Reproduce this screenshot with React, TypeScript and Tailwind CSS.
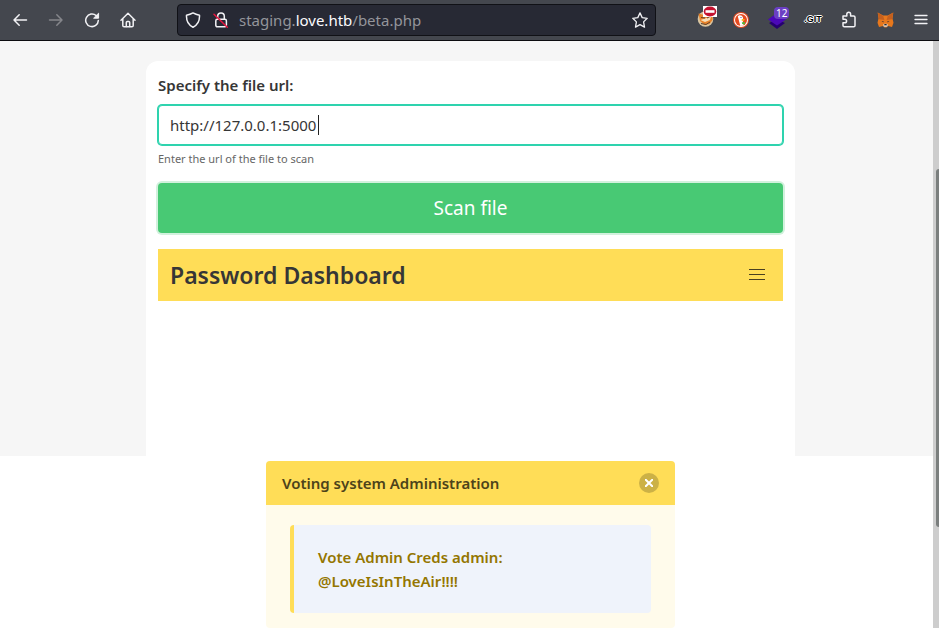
import { useState } from "react";

const stroke = {
  fill: "none",
  stroke: "currentColor",
  strokeWidth: 1.5,
  strokeLinecap: "round",
  strokeLinejoin: "round",
} as const;

function BackIcon() {
  return (
    <svg width="16" height="16" viewBox="0 0 16 16" {...stroke}>
      <path d="M14.5 8H2M7.2 2.8 2 8l5.2 5.2" />
    </svg>
  );
}

function ForwardIcon() {
  return (
    <svg width="16" height="16" viewBox="0 0 16 16" {...stroke}>
      <path d="M1.5 8H14M8.8 2.8 14 8l-5.2 5.2" />
    </svg>
  );
}

function ReloadIcon() {
  return (
    <svg width="16" height="16" viewBox="0 0 16 16" {...stroke}>
      <path d="M12.2 3.6A6.3 6.3 0 1 0 14.3 8.6" />
      <path d="M14.6 1.6v4.600H10z" fill="currentColor" strokeWidth="1" />
    </svg>
  );
}

function HomeIcon() {
  return (
    <svg width="16" height="16" viewBox="0 0 16 16" {...stroke}>
      <path d="M1 8.2 8 1.3l7 6.9M2.8 6.8v6.7c0 .8.5 1.3 1.3 1.3h7.8c.8 0 1.3-.5 1.3-1.3V6.8" />
      <path d="M6.3 14.6v-4c0-.6.4-1 1-1h1.4c.6 0 1 .4 1 1v4" />
    </svg>
  );
}

function ShieldIcon() {
  return (
    <svg width="16" height="16" viewBox="0 0 16 16" {...stroke}>
      <path d="M8 .9c2 1.2 4 1.9 6.5 2.3.3 5.6-1.7 9.7-6.5 12-4.800-2.300-6.800-6.400-6.500-12C4 2.800 6 2.100 8 .9z" />
    </svg>
  );
}

function BrokenLockIcon() {
  return (
    <svg width="16" height="16" viewBox="0 0 16 16" {...stroke}>
      <path d="M4.700 7V4.200a3.300 3.300 0 0 1 6.600 0V7" />
      <rect x="2.800" y="7.200" width="10.600" height="7.600" rx="1.500" />
      <path d="M1 2.200 14.300 15.200" stroke="#e7153f" />
    </svg>
  );
}

function StarIcon() {
  return (
    <svg width="16" height="16" viewBox="0 0 16 16" {...stroke} strokeWidth={1.3}>
      <path d="m8 .9 2.200 4.700 5 .700-3.600 3.600.900 5.200L8 12.600l-4.500 2.500.900-5.200L.8 6.300l5-.700z" />
    </svg>
  );
}

function FoxProxyIcon() {
  return (
    <svg width="18" height="22" viewBox="0 0 18 22" className="overflow-visible">
      <circle cx="9.500" cy="13" r="7.800" fill="#d9c6a2" />
      <path d="M2.500 7.500 8 9l6-1 3-1-.5 7-3 4-5 1-4.500-4z" fill="#e9832a" />
      <path d="m4.500 14 4.500-1.500 6-2-1 3.500-5 2z" fill="#f8dfb6" />
      <path d="m5 11.500 4 .5M11 12l4-2M5 17.500l5 1 4-2.500" stroke="#5f432b" strokeWidth="1" fill="none" />
      <rect x="7" y="0" width="14" height="11" fill="#fff" />
      <ellipse cx="14" cy="5.500" rx="6.300" ry="5" fill="#c4122f" />
      <rect x="9.500" y="4.200" width="9" height="2.600" fill="#fff" />
    </svg>
  );
}

function DuckIcon() {
  return (
    <svg width="16" height="16" viewBox="0 0 16 16">
      <circle cx="8" cy="8" r="8" fill="#e64b20" />
      <circle cx="8" cy="8" r="7" fill="#fff" />
      <circle cx="8" cy="8" r="6" fill="#e64b20" />
      <path d="M4.800 4.300c1-1.800 4.700-1.500 5.200 1.400l.2 2.500-.5 2 1 3.200-3.400.500z" fill="#fff" />
      <path d="m8.800 7 3.200.2-1.300 1.600-2 .1z" fill="#fdb913" />
      <path d="m8.800 10.500 3-.7v2.600l-2.600-.4z" fill="#4cba3c" />
      <circle cx="8" cy="5.500" r=".6" fill="#31557a" />
    </svg>
  );
}

function LayersIcon() {
  return (
    <svg width="18" height="18" viewBox="0 0 18 18">
      <path d="m1 12 8-4 8 4-8 6z" fill="#260071" />
      <path d="m0 8.500 9-6.500 9 6.500-9 6z" fill="#4b08b8" />
    </svg>
  );
}

function PuzzleIcon() {
  return (
    <svg width="16" height="17" viewBox="0 0 16 17" {...stroke}>
      <path d="M2 5h3.800V3.200a1.900 1.900 0 0 1 3.800 0V5h3.100c.8 0 1.300.5 1.300 1.300v8.200c0 .8-.5 1.300-1.300 1.300H3.300c-.8 0-1.300-.5-1.300-1.300v-2.700h1.800a1.800 1.800 0 0 0 0-3.600H2z" />
    </svg>
  );
}

function FoxIcon() {
  return (
    <svg width="17" height="16" viewBox="0 0 17 16">
      <path d="m.7.6 5.500 3h4.600l5.500-3-.8 6 1 4.200-1.500 4.300-4-1-1.500 1.300h-2L6 14.100l-4 1-1.500-4.300 1-4.200z" fill="#e8781c" />
      <path d="M.7.6 6.200 4l1.200 4-5.500-.7zM16.300.6 10.800 4l-1.200 4 5.500-.7z" fill="#c4601f" />
      <path d="m4.500 9 2.200.300-.3 1.200zM12.500 9l-2.200.300.3 1.200z" fill="#493333" />
      <path d="m6 12.500 1.500-.700h2l1.500.700-.5 1.700-1 .800h-2l-1-.8z" fill="#d8c4b2" />
      <path d="M7.500 12h2l.3 1.200H7.200z" fill="#24292e" />
    </svg>
  );
}

function MenuIcon() {
  return (
    <svg width="14" height="12" viewBox="0 0 14 12" {...stroke} strokeWidth={1.3}>
      <path d="M1 1.500h12M1 5.500h12M1 9.500h12" />
    </svg>
  );
}

function Toolbar() {
  return (
    <header className="flex h-[41px] items-center border-b border-[#0c0c10] bg-[#44474e] pl-0.5 text-[#f2f2f5]">
      <nav className="flex shrink-0 items-center *:grid *:w-9 *:place-items-center" aria-label="Navigation">
        <button aria-label="Back"><BackIcon /></button>
        <button aria-label="Forward" className="text-[#85868b]"><ForwardIcon /></button>
        <button aria-label="Reload"><ReloadIcon /></button>
        <button aria-label="Home"><HomeIcon /></button>
      </nav>
      <div className="mx-[31px] flex h-8 min-w-0 flex-1 items-center rounded border border-[#101116] bg-[#272934] px-[7px]">
        <button aria-label="Tracking protection"><ShieldIcon /></button>
        <button aria-label="Connection is not secure" className="ml-3"><BrokenLockIcon /></button>
        <p className="ml-2.5 flex-1 truncate text-[15px] leading-6 text-[#94959b]">
          staging.<span className="text-[#fbfbfe]">love.htb</span>/beta.php
        </p>
        <button aria-label="Bookmark this page"><StarIcon /></button>
      </div>
      <div className="grid shrink-0 grid-cols-[repeat(7,36px)] items-center justify-items-center">
        <button aria-label="FoxProxy" className="pb-1.5"><FoxProxyIcon /></button>
        <button aria-label="Privacy essentials"><DuckIcon /></button>
        <button aria-label="Wappalyzer" className="relative">
          <LayersIcon />
          <span className="absolute -top-1 left-1.5 rounded-sm bg-[#6b3fc4] px-0.5 text-[10px] leading-3 text-white">12</span>
        </button>
        <button aria-label="DotGit" className="font-['Liberation_Sans',sans-serif] text-[9px] font-bold text-black [text-shadow:1px_0_0_white,-1px_0_0_white,0_1px_0_white,0_-1px_0_white]">.GIT</button>
        <button aria-label="Extensions" className="pb-0.5"><PuzzleIcon /></button>
        <button aria-label="MetaMask"><FoxIcon /></button>
        <button aria-label="Open application menu"><MenuIcon /></button>
      </div>
    </header>
  );
}

function ScanForm() {
  const [url, setUrl] = useState("http://127.0.0.1:5000");
  return (
    <form onSubmit={(e) => e.preventDefault()}>
      <label htmlFor="file-url" className="mb-2 block text-[15px] leading-6 font-semibold text-[#363636]">
        Specify the file url:
      </label>
      <div className="relative">
        <input
          id="file-url"
          type="text"
          value={url}
          onChange={(e) => setUrl(e.target.value)}
          className="block h-10 w-full rounded border border-[#2ed3ae] bg-white px-[11px] text-[15px] text-[#363636] ring-1 ring-[#2ed3ae] outline-none"
        />
        <span className="absolute top-2.5 left-40 h-5 w-px bg-[#222]" />
      </div>
      <p className="mt-1 text-[11px] leading-5 text-[#666]">Enter the url of the file to scan</p>
      <button className="mt-3.5 block h-[50px] w-full rounded bg-[#48c974] text-[19px] text-white ring-2 ring-[#d2f1dd]">
        Scan file
      </button>
    </form>
  );
}

function DashboardBar() {
  return (
    <div className="mt-4 flex h-13 items-center justify-between bg-[#ffdd57] pr-[18px] pl-3">
      <h1 className="text-[23px] font-semibold text-[#363636]">Password Dashboard</h1>
      <button aria-label="Menu" className="flex w-4 flex-col gap-1 pb-0.5">
        <span className="h-px w-full bg-[#4a4020]" />
        <span className="h-px w-full bg-[#4a4020]" />
        <span className="h-px w-full bg-[#4a4020]" />
      </button>
    </div>
  );
}

function CredentialsMessage() {
  return (
    <article className="mx-auto mt-[5px] max-w-[409px] flex-1 rounded bg-[#fffbeb]">
      <div className="flex h-11 items-center justify-between rounded-t bg-[#ffdd57] px-4">
        <h2 className="text-[15px] leading-6 font-semibold text-[#4d431a]">Voting system Administration</h2>
        <button aria-label="Close" className="grid size-5 place-items-center rounded-full bg-[#ccb146] text-white">
          <svg width="8" height="8" viewBox="0 0 8 8" stroke="currentColor" strokeWidth="2">
            <path d="m0 0 8 8M8 0 0 8" />
          </svg>
        </button>
      </div>
      <div className="px-6 pt-5">
        <p className="rounded border-l-4 border-[#ffdd57] bg-[#eff3fb] px-6 py-5 text-[15px] leading-6 font-semibold text-[#947600]">
          Vote Admin Creds admin:
          <br />
          @LoveIsInTheAir!!!!
        </p>
      </div>
    </article>
  );
}

export default function App() {
  return (
    <div className="flex h-screen flex-col overflow-hidden bg-white font-['Noto_Sans',sans-serif]">
      <Toolbar />
      <main className="relative flex min-h-0 flex-1 flex-col">
        <section className="bg-[#f6f6f6] pt-5 pl-0.5">
          <div className="mx-auto min-h-[395px] max-w-[649px] rounded-t-xl bg-white p-3">
            <ScanForm />
            <DashboardBar />
          </div>
        </section>
        <section className="flex flex-1 flex-col pl-0.5 *:w-full">
          <CredentialsMessage />
        </section>
        <div className="absolute inset-y-0 right-0 w-1.5 bg-[#cdcdcd]">
          <div className="mt-32 ml-[3px] h-[358px] rounded-l bg-[#7b7f7e]" />
        </div>
      </main>
    </div>
  );
}
